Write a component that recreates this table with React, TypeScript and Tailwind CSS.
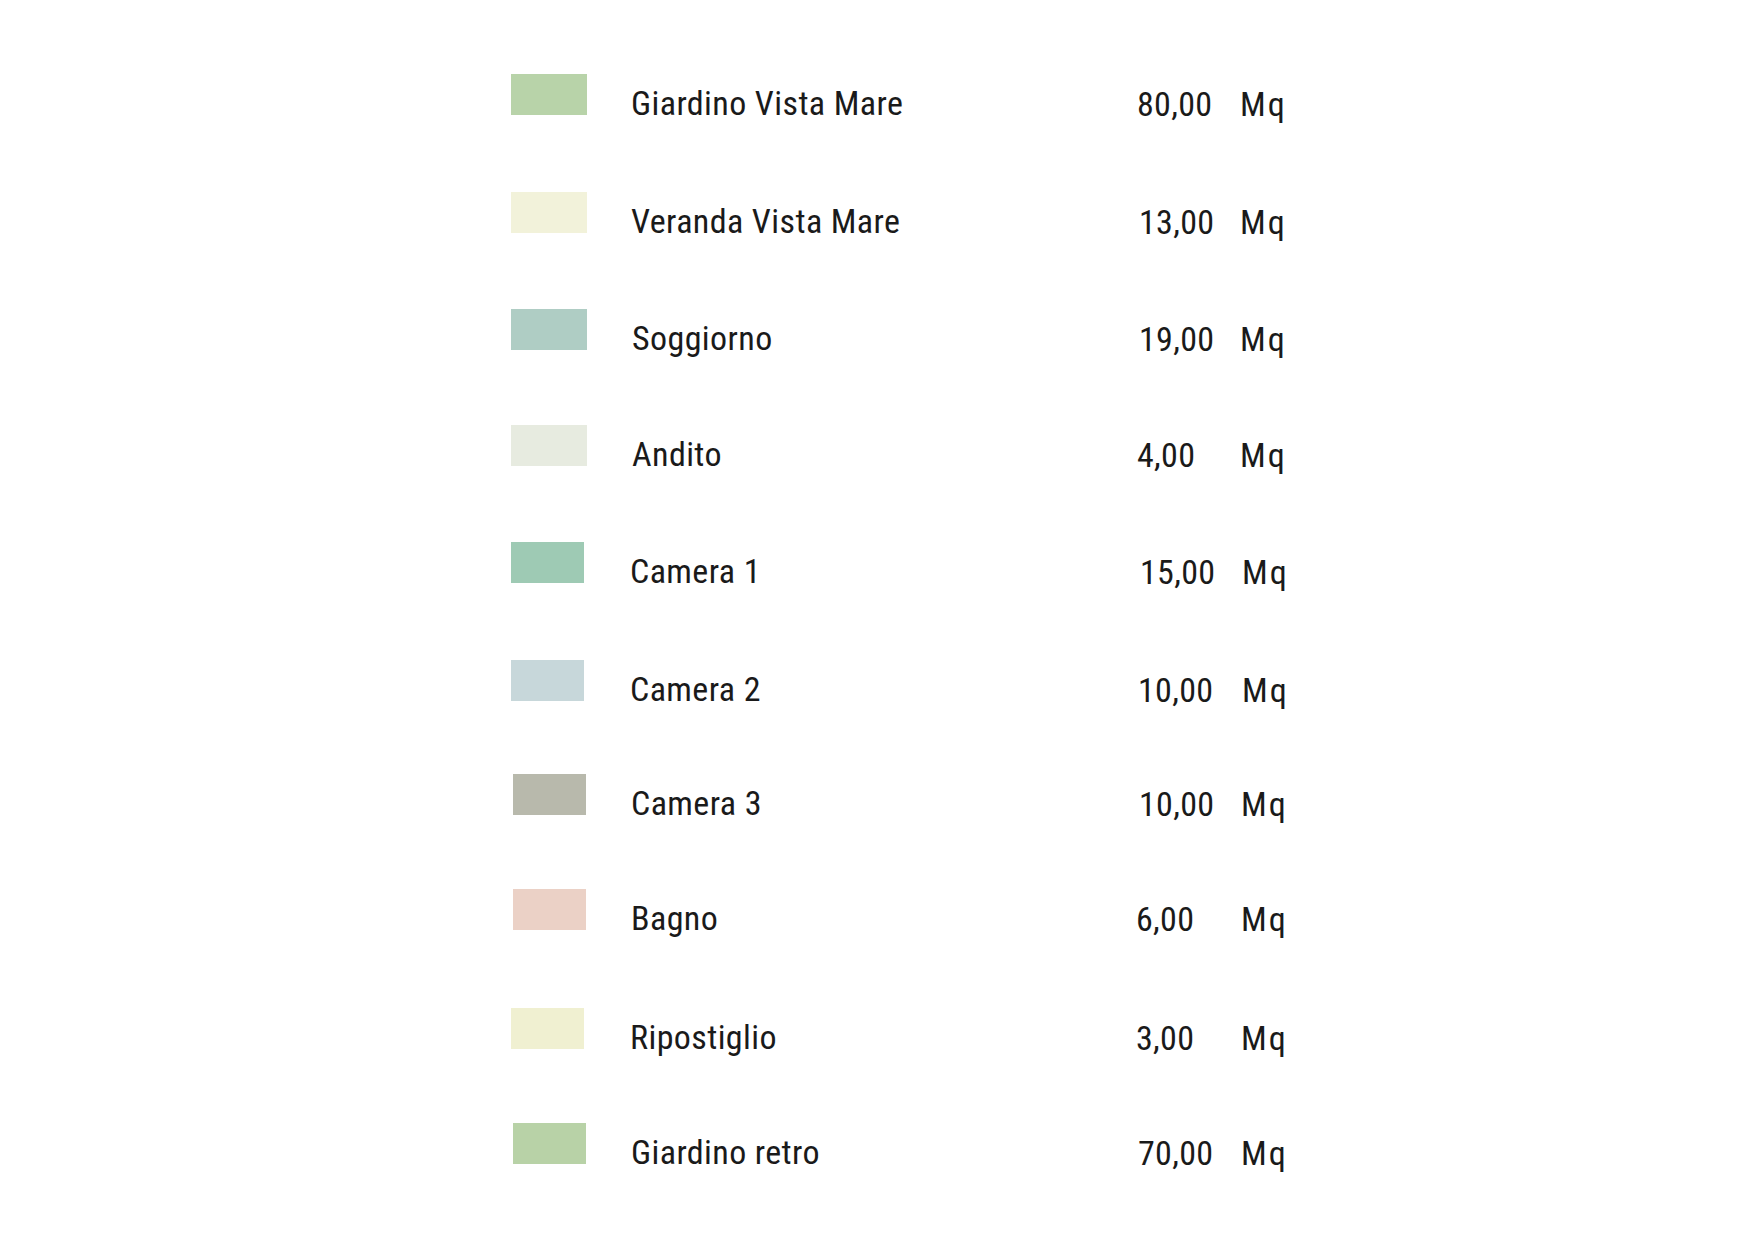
import React from "react";

type Row = {
  label: string;
  value: string;
  mt: string;
  sw: string;
  lab: string;
  num: string;
  mq: string;
};

const rows: Row[] = [
  { label: "Giardino Vista Mare", value: "80,00", mt: "mt-[74px]", sw: "ml-0 w-[76px] bg-[#b8d3a9]", lab: "ml-0", num: "ml-0", mq: "ml-0" },
  { label: "Veranda Vista Mare", value: "13,00", mt: "mt-[77px]", sw: "ml-0 w-[76px] bg-[#f2f2da]", lab: "ml-0", num: "ml-[2px]", mq: "ml-0" },
  { label: "Soggiorno", value: "19,00", mt: "mt-[76px]", sw: "ml-0 w-[76px] bg-[#afcdc4]", lab: "ml-[1px]", num: "ml-[2px]", mq: "ml-0" },
  { label: "Andito", value: "4,00", mt: "mt-[75px]", sw: "ml-0 w-[76px] bg-[#e7ebe0]", lab: "ml-[1px]", num: "ml-0", mq: "ml-0" },
  { label: "Camera 1", value: "15,00", mt: "mt-[76px]", sw: "ml-0 w-[73px] bg-[#9ecab4]", lab: "ml-[-1px]", num: "ml-[3px]", mq: "ml-[2px]" },
  { label: "Camera 2", value: "10,00", mt: "mt-[77px]", sw: "ml-0 w-[73px] bg-[#c7d7da]", lab: "ml-[-1px]", num: "ml-[1px]", mq: "ml-[2px]" },
  { label: "Camera 3", value: "10,00", mt: "mt-[73px]", sw: "ml-[2px] w-[73px] bg-[#b8b9ac]", lab: "ml-0", num: "ml-[2px]", mq: "ml-[1px]" },
  { label: "Bagno", value: "6,00", mt: "mt-[74px]", sw: "ml-[2px] w-[73px] bg-[#ebd1c6]", lab: "ml-0", num: "ml-[-1px]", mq: "ml-[1px]" },
  { label: "Ripostiglio", value: "3,00", mt: "mt-[78px]", sw: "ml-0 w-[73px] bg-[#f0f0d1]", lab: "ml-[-1px]", num: "ml-[-1px]", mq: "ml-[1px]" },
  { label: "Giardino retro", value: "70,00", mt: "mt-[74px]", sw: "ml-[2px] w-[73px] bg-[#b8d2a7]", lab: "ml-0", num: "ml-[1px]", mq: "ml-[1px]" },
];

export default function App() {
  return (
    <div className="w-[1753px] h-[1240px] bg-white overflow-hidden font-['Roboto',sans-serif] font-stretch-condensed text-[34px] leading-none text-[#1a1a1a]">
      <div className="flex flex-col pl-[511px]">
        {rows.map((r) => (
          <div key={r.label} className={`grid grid-cols-[120px_506px_103px_auto] h-[41px] ${r.mt}`}>
            <div className={`h-[41px] ${r.sw}`} />
            <span className={`mt-[12px] whitespace-nowrap tracking-[0.4px] ${r.lab}`}>{r.label}</span>
            <span className={`mt-[13px] whitespace-nowrap tracking-[0.3px] ${r.num}`}>{r.value}</span>
            <span className={`mt-[13px] whitespace-nowrap tracking-[2px] ${r.mq}`}>Mq</span>
          </div>
        ))}
      </div>
    </div>
  );
}
